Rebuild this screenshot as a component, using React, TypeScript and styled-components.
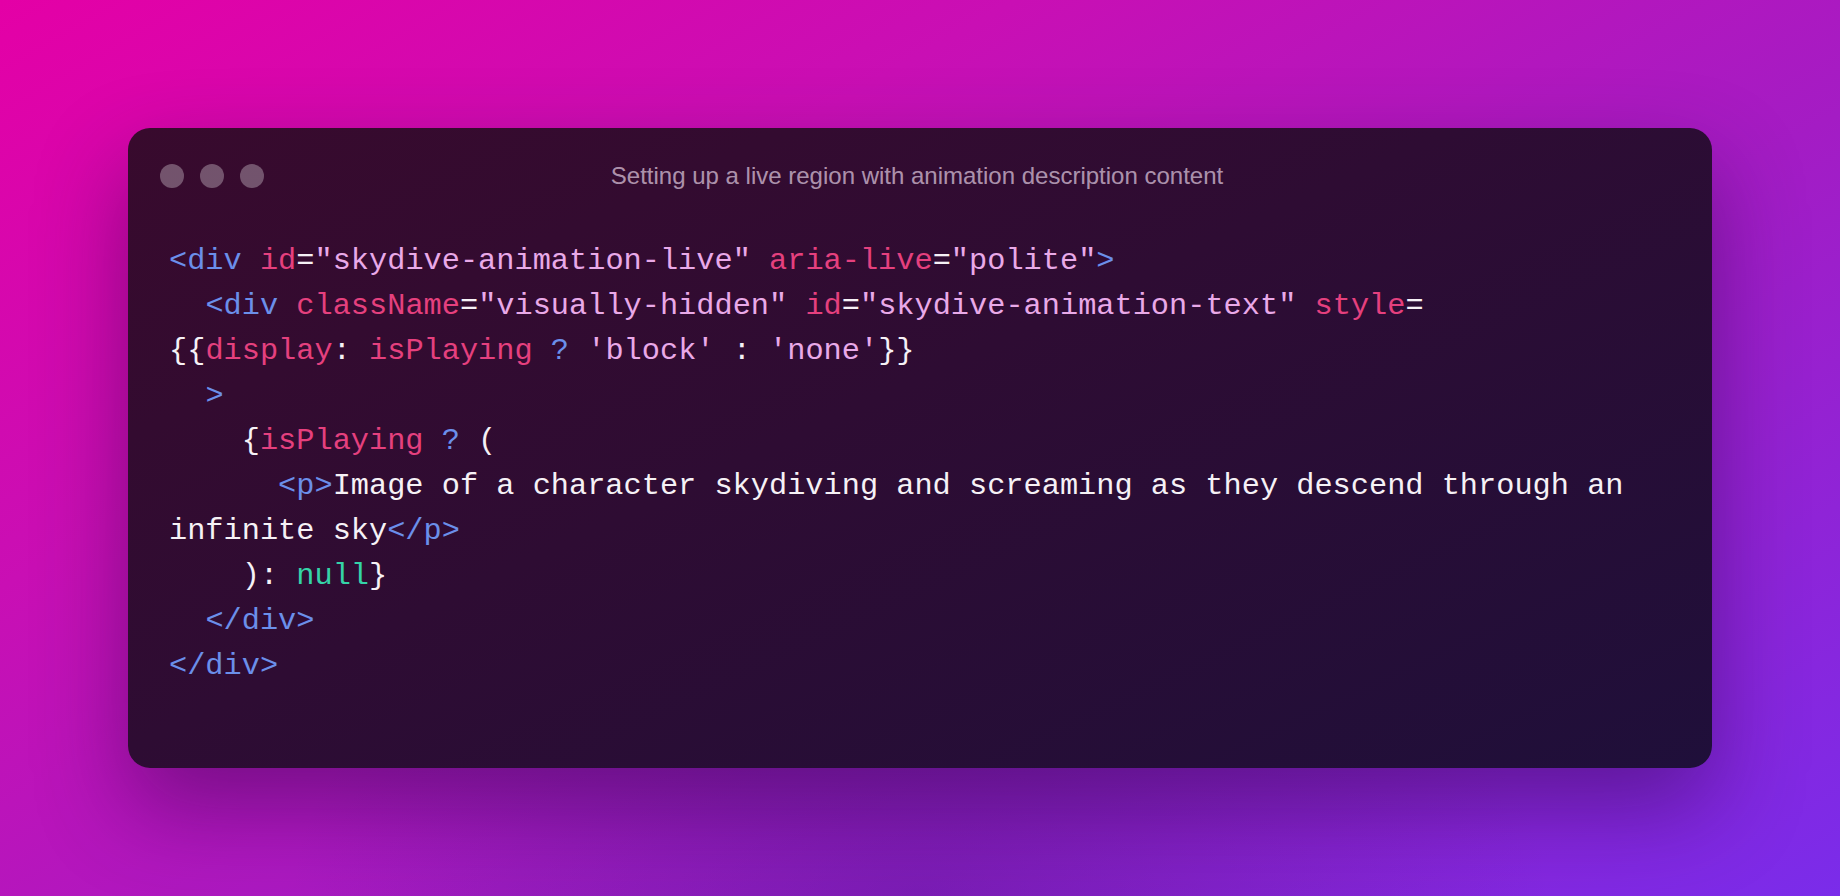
import styled, { createGlobalStyle } from "styled-components";

type Tone = "tag" | "attr" | "str" | "plain" | "op" | "kw";

const tones: Record<Tone, string> = {
  tag: "#6b8fea",
  attr: "#e5407e",
  str: "#e9a9e8",
  plain: "#f6f1f6",
  op: "#6b8fea",
  kw: "#35d3a8",
};

type Token = [Tone, string];

const lines: Token[][] = [
  [
    ["tag", "<div"],
    ["plain", " "],
    ["attr", "id"],
    ["plain", "="],
    ["str", '"skydive-animation-live"'],
    ["plain", " "],
    ["attr", "aria-live"],
    ["plain", "="],
    ["str", '"polite"'],
    ["tag", ">"],
  ],
  [
    ["plain", "  "],
    ["tag", "<div"],
    ["plain", " "],
    ["attr", "className"],
    ["plain", "="],
    ["str", '"visually-hidden"'],
    ["plain", " "],
    ["attr", "id"],
    ["plain", "="],
    ["str", '"skydive-animation-text"'],
    ["plain", " "],
    ["attr", "style"],
    ["plain", "="],
  ],
  [
    ["plain", "{{"],
    ["attr", "display"],
    ["plain", ": "],
    ["attr", "isPlaying"],
    ["plain", " "],
    ["op", "?"],
    ["plain", " "],
    ["str", "'block'"],
    ["plain", " : "],
    ["str", "'none'"],
    ["plain", "}}"],
  ],
  [
    ["plain", "  "],
    ["tag", ">"],
  ],
  [
    ["plain", "    {"],
    ["attr", "isPlaying"],
    ["plain", " "],
    ["op", "?"],
    ["plain", " ("],
  ],
  [
    ["plain", "      "],
    ["tag", "<p>"],
    ["plain", "Image of a character skydiving and screaming as they descend through an"],
  ],
  [
    ["plain", "infinite sky"],
    ["tag", "</p>"],
  ],
  [
    ["plain", "    ): "],
    ["kw", "null"],
    ["plain", "}"],
  ],
  [
    ["plain", "  "],
    ["tag", "</div>"],
  ],
  [["tag", "</div>"]],
];

const GlobalStyle = createGlobalStyle`
  html, body {
    margin: 0;
    padding: 0;
  }
  body {
    background: #c010b8;
  }
`;

const Page = styled.main`
  width: 1840px;
  height: 896px;
  box-sizing: border-box;
  padding: 128px;
  background:
    radial-gradient(ellipse 900px 500px at 50% 100%, rgba(70, 20, 130, 0.35), transparent 70%),
    linear-gradient(150deg, #e400a6 0%, #c90fb4 30%, #a41cc4 60%, #7a2cea 100%);
  overflow: hidden;
`;

const Window = styled.section`
  width: 1584px;
  height: 640px;
  box-sizing: border-box;
  padding: 36px 38px 0 32px;
  border-radius: 22px;
  background: linear-gradient(155deg, #380a2d 0%, #2e0c33 45%, #1f0f3a 100%);
  box-shadow: 0 40px 90px rgba(45, 5, 70, 0.45);
`;

const Header = styled.header`
  display: grid;
  grid-template-columns: 1fr auto 1fr;
  align-items: center;
  height: 24px;
`;

const Dots = styled.div`
  display: flex;
  gap: 16px;
`;

const Dot = styled.span`
  width: 24px;
  height: 24px;
  border-radius: 50%;
  background: rgba(255, 255, 255, 0.3);
`;

const Title = styled.h1`
  margin: 0;
  font-family: "Liberation Sans", Arial, sans-serif;
  font-size: 24px;
  line-height: 24px;
  font-weight: 400;
  color: rgba(255, 235, 255, 0.62);
  white-space: nowrap;
`;

const Code = styled.pre`
  margin: 51px 0 0 9px;
  font-family: "Liberation Mono", "Courier New", monospace;
  font-size: 30.3px;
  line-height: 45px;
  color: ${tones.plain};
`;

const Line = styled.div`
  white-space: pre;
`;

const Span = styled.span<{ $tone: Tone }>`
  color: ${(p) => tones[p.$tone]};
`;

export default function App() {
  return (
    <>
      <GlobalStyle />
      <Page>
        <Window>
          <Header>
            <Dots>
              <Dot />
              <Dot />
              <Dot />
            </Dots>
            <Title>Setting up a live region with animation description content</Title>
            <div />
          </Header>
          <Code>
            {lines.map((line, i) => (
              <Line key={i}>
                {line.map(([tone, text], j) => (
                  <Span key={j} $tone={tone}>
                    {text}
                  </Span>
                ))}
              </Line>
            ))}
          </Code>
        </Window>
      </Page>
    </>
  );
}
